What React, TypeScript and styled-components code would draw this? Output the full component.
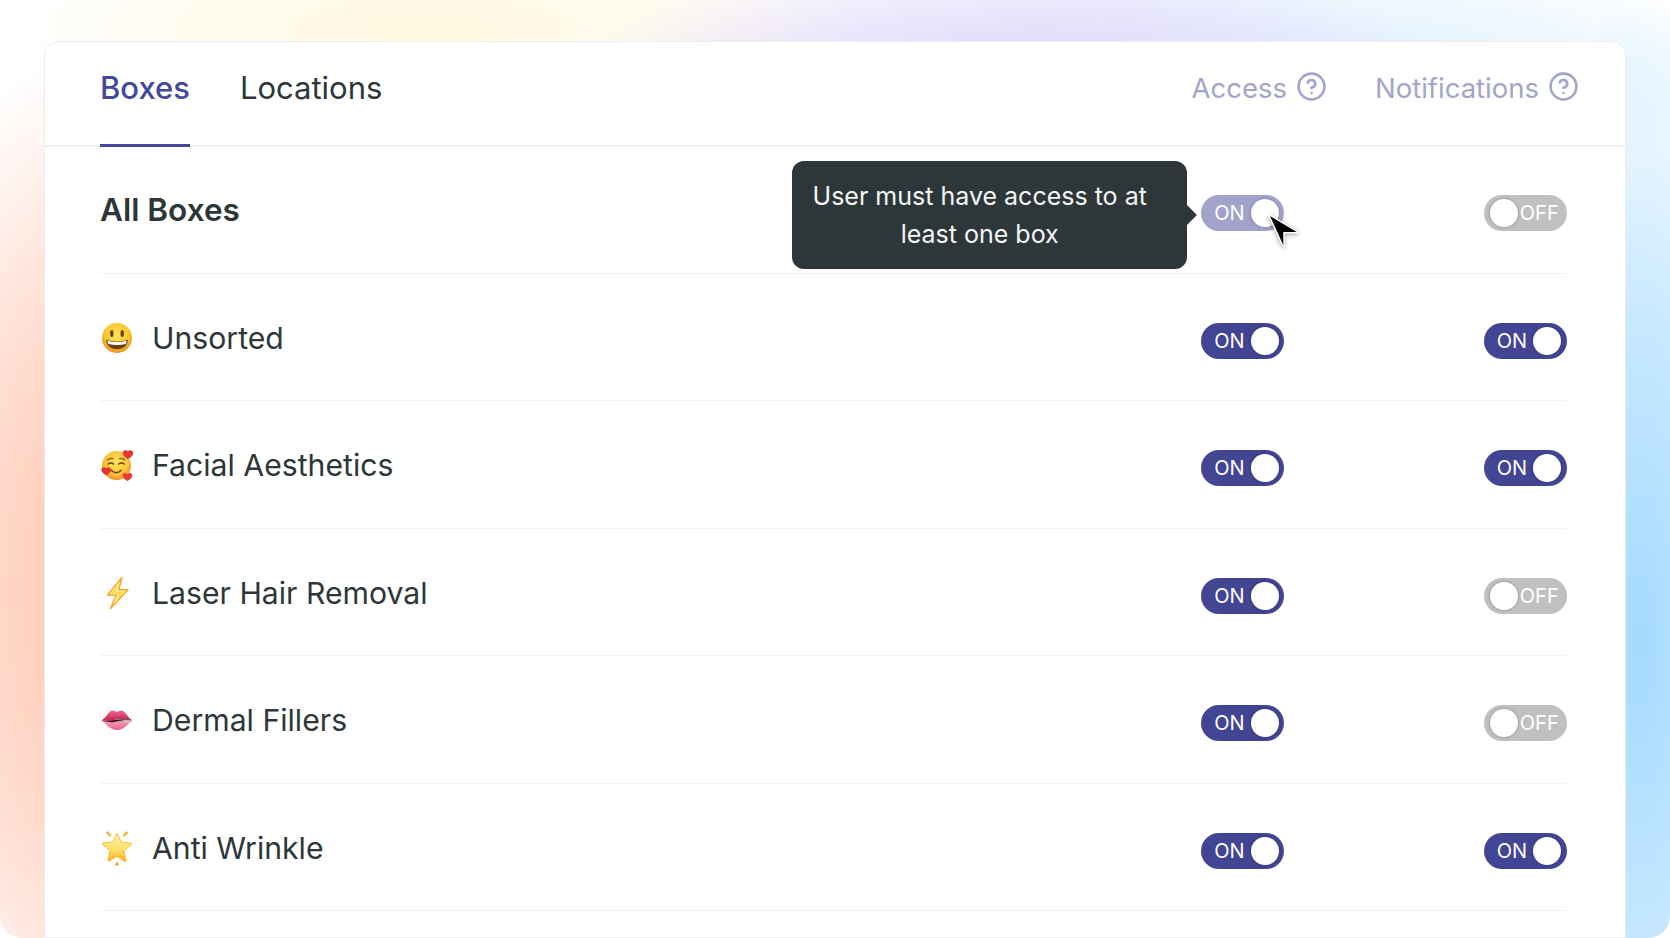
import React from 'react';
import styled, { createGlobalStyle } from 'styled-components';
import { CircleHelp } from 'lucide-react';

const GlobalStyle = createGlobalStyle`
    html, body {
        margin: 0;
        padding: 0;
        background: #fff;
        font-family: Inter, "Liberation Sans", sans-serif;
        -webkit-font-smoothing: antialiased;
    }
`;

const Frame = styled.div`
    display: flex;
    flex-direction: column;
    height: 938px;
    box-sizing: border-box;
    padding: 41px 44px 0 44px;
    overflow: hidden;
    border-radius: 22px;
    background:
        radial-gradient(ellipse 230px 540px at 90px 590px, #ffc4ae 0%, rgba(255, 196, 174, 0.6) 50%, rgba(255, 196, 174, 0) 100%),
        radial-gradient(ellipse 160px 640px at 1640px 640px, #a3d9ff 0%, rgba(163, 217, 255, 0.6) 50%, rgba(163, 217, 255, 0) 100%),
        radial-gradient(ellipse 430px 120px at 1010px 70px, #dfd6f9 0%, rgba(223, 214, 249, 0.55) 55%, rgba(223, 214, 249, 0) 100%),
        radial-gradient(ellipse 430px 120px at 1340px 70px, #dff1ff 0%, rgba(223, 241, 255, 0.55) 55%, rgba(223, 241, 255, 0) 100%),
        radial-gradient(ellipse 420px 110px at 430px 30px, #fff8e0 0%, rgba(255, 248, 224, 0.55) 55%, rgba(255, 248, 224, 0) 100%);
    background-color: #fff;
`;

const Card = styled.div`
    flex: 1;
    box-sizing: border-box;
    background: #fff;
    border: 1px solid rgba(60, 60, 90, 0.09);
    border-radius: 15px 15px 0 0;
    color: #2d3739;
`;

const Header = styled.header`
    display: flex;
    align-items: stretch;
    justify-content: space-between;
    height: 105px;
    box-sizing: border-box;
    padding: 0 46px 0 55px;
    border-bottom: 2px solid #f0f0f2;
`;

const Tabs = styled.nav`
    display: flex;
    gap: 50px;
`;

const Tab = styled.div<{ $active?: boolean }>`
    height: 105px;
    box-sizing: border-box;
    padding-top: 26.500px;
    font-size: 31px;
    line-height: 38px;
    font-weight: ${(p) => (p.$active ? 500 : 400)};
    color: ${(p) => (p.$active ? '#44489b' : '#2d3739')};
    border-bottom: 3px solid ${(p) => (p.$active ? '#44489b' : 'transparent')};
`;

const Columns = styled.div`
    display: flex;
    gap: 48px;
    padding-top: 29px;
`;

const ColumnTitle = styled.div`
    display: flex;
    align-items: flex-start;
    gap: 9px;
    font-size: 27.500px;
    line-height: 34px;
    color: #a2a4cd;
`;

const HelpIcon = styled(CircleHelp)`
    width: 31px;
    height: 31px;
    color: #a2a4cd;
`;

const List = styled.div`
    margin-top: -1px;
    padding: 0 58.300px 0 55px;
`;

const Row = styled.div`
    display: grid;
    grid-template-columns: 1fr 83px 83px;
    column-gap: 199.500px;
    align-items: center;
    height: 127.500px;
    box-sizing: border-box;
    padding-top: 2px;
    border-bottom: 1px solid #f2f2f3;
`;

const Name = styled.div<{ $bold?: boolean }>`
    display: flex;
    align-items: center;
    gap: 19px;
    font-size: ${(p) => (p.$bold ? 31.5 : 30.2)}px;
    line-height: 38px;
    font-weight: ${(p) => (p.$bold ? 600 : 400)};
    color: #2d3739;
`;

const EmojiBox = styled.svg`
    display: block;
    width: 32px;
    height: 32px;
    margin-left: 1px;
    flex: none;
    overflow: visible;
`;

const ToggleWrap = styled.div`
    position: relative;
    margin-top: 6px;
`;

const Toggle = styled.div<{ $on: boolean; $muted?: boolean }>`
    display: flex;
    flex-direction: ${(p) => (p.$on ? 'row' : 'row-reverse')};
    align-items: center;
    justify-content: space-between;
    width: 83px;
    height: 36px;
    box-sizing: border-box;
    padding: ${(p) => (p.$on ? '0 5.500px 0 13px' : '0 8px 0 6px')};
    border-radius: 18px;
    background: ${(p) => (p.$muted ? '#a2a3cb' : p.$on ? '#414594' : '#c2c0be')};
    color: #fff;
    font-size: 20px;
    font-weight: 400;
    line-height: 40px;
`;

const Knob = styled.span`
    width: 28px;
    height: 28px;
    border-radius: 50%;
    background: #fff;
    box-shadow: 0 0 3px rgba(0, 0, 0, 0.3);
`;

const Tooltip = styled.div`
    position: absolute;
    right: calc(100% + 14px);
    top: -34px;
    width: 395px;
    height: 108px;
    box-sizing: border-box;
    padding: 16px 32px 16px 12px;
    border-radius: 12px;
    background: #2d3739;
    color: #f4f5f5;
    font-size: 25px;
    line-height: 38px;
    text-align: center;

    &::after {
        content: '';
        position: absolute;
        top: 47px;
        right: -7px;
        width: 14px;
        height: 14px;
        background: #2d3739;
        transform: rotate(45deg);
    }
`;

const Cursor = styled.svg`
    position: absolute;
    left: 64px;
    top: 18px;
    width: 36px;
    height: 38px;
    filter: drop-shadow(0 1px 2px rgba(0, 0, 0, 0.4));
`;

type EmojiKind = 'smile' | 'hearts' | 'bolt' | 'lips' | 'star';

const Emoji = ({ kind }: { kind: EmojiKind }) => {
    if (kind === 'smile') {
        return (
            <EmojiBox viewBox="0 0 32 32">
                <defs>
                    <radialGradient id="smileFace" cx="50%" cy="40%" r="60%">
                        <stop offset="0%" stopColor="#ffe45c" />
                        <stop offset="65%" stopColor="#fbc92f" />
                        <stop offset="100%" stopColor="#ea8d1c" />
                    </radialGradient>
                </defs>
                <circle cx="16" cy="16" r="15" fill="url(#smileFace)" />
                <ellipse cx="10.800" cy="11.500" rx="1.700" ry="3.500" fill="#6b3f12" />
                <ellipse cx="21.200" cy="11.500" rx="1.700" ry="3.500" fill="#6b3f12" />
                <path d="M5 17.500c3.500 1.400 7 2 11 2s7.500-.6 11-2c-.3 6-4.800 9.800-11 9.800S5.300 23.500 5 17.500z" fill="#6b3f12" />
                <path d="M6.300 18.500c3 1 6.300 1.500 9.700 1.500s6.700-.5 9.700-1.500c-.2 1.500-.5 2.500-1 3.400-2.800.8-5.700 1.100-8.700 1.100s-5.900-.3-8.700-1.100c-.5-.9-.8-1.900-1-3.400z" fill="#fff" />
            </EmojiBox>
        );
    }
    if (kind === 'hearts') {
        return (
            <EmojiBox viewBox="0 0 32 32">
                <defs>
                    <radialGradient id="heartsFace" cx="50%" cy="40%" r="60%">
                        <stop offset="0%" stopColor="#ffe45c" />
                        <stop offset="65%" stopColor="#fbc53a" />
                        <stop offset="100%" stopColor="#ee8f2a" />
                    </radialGradient>
                </defs>
                <circle cx="15.500" cy="16.500" r="14.500" fill="url(#heartsFace)" />
                <path d="M6 11.500c2-2 4.500-2.500 7-1.800M18 9.700c2.500-.7 4.500-.2 6.300 1.600" stroke="#8a5414" strokeWidth="1.100" fill="none" />
                <path d="M7 15c1.800-1.300 3.800-1.300 5.500 0M17.700 15c1.700-1.300 3.700-1.300 5.500 0" stroke="#6b3f12" strokeWidth="1.500" fill="none" strokeLinecap="round" />
                <path d="M10.500 21.500c2.800 2.800 6.700 2.800 9.500 0" stroke="#6b3f12" strokeWidth="1.600" fill="none" strokeLinecap="round" />
                <path d="M27 10c-3-1.900-5.200-3.700-5.200-6.100 0-2.800 3.600-3.600 5.200-1.300 1.600-2.300 5.200-1.500 5.200 1.300 0 2.400-2.200 4.200-5.200 6.100z" fill="#e8342f" />
                <path d="M5.200 26.500C2.400 24.700.2 23 .2 20.800c0-2.600 3.500-3.400 5-1.200 1.500-2.200 5-1.400 5 1.200 0 2.200-2.200 3.900-5 5.700z" fill="#e8342f" />
                <path d="M26.500 32c-2.800-1.700-4.800-3.400-4.800-5.600 0-2.600 3.300-3.300 4.800-1.200 1.500-2.100 4.800-1.400 4.800 1.200 0 2.200-2 3.900-4.800 5.600z" fill="#ee3b36" />
            </EmojiBox>
        );
    }
    if (kind === 'bolt') {
        return (
            <EmojiBox viewBox="0 0 32 32">
                <path d="M21 .5 6.500 18h8.800L9.500 31.500 27 12.700h-9.300z" fill="#fff6b8" stroke="#f7a928" strokeWidth="1.500" strokeLinejoin="round" />
                <path d="M18.500 5.500 9.800 16.500h8.300l-3.900 8.500 9-10.600h-8.700z" fill="#ffd94a" />
            </EmojiBox>
        );
    }
    if (kind === 'lips') {
        return (
            <EmojiBox viewBox="0 0 32 32">
                <defs>
                    <linearGradient id="lipTop" x1="0" y1="0" x2="0" y2="1">
                        <stop offset="0%" stopColor="#f0668a" />
                        <stop offset="100%" stopColor="#b8234f" />
                    </linearGradient>
                    <linearGradient id="lipBottom" x1="0" y1="0" x2="0" y2="1">
                        <stop offset="0%" stopColor="#f7a0b8" />
                        <stop offset="100%" stopColor="#e8648b" />
                    </linearGradient>
                </defs>
                <path d="M.5 16.500c4 2 7.500 9.500 15.500 9.500s11.500-7.500 15.500-9.500z" fill="url(#lipBottom)" />
                <path d="M.5 16.500C5 14 8 6.500 11.500 6.500c1.800 0 3.300.8 4.500 1.700 1.200-.9 2.700-1.700 4.500-1.700 3.500 0 6.500 7.500 11 10-4.500.5-9.500.7-15.500.7s-11-.2-15.500-.7z" fill="url(#lipTop)" />
                <path d="M14 15.600c5-1.100 11-.9 17.500.9-5.500 1.300-12 1.300-17.500-.9z" fill="#e8e8ea" />
                <path d="M.5 16.500c4.500 1 8.500.9 12.500-.2 6-1.500 12.500-1.300 18.500.2-6-.4-12.500 0-18 1.400-4 .7-9 0-13-1.400z" fill="#2b1a20" />
            </EmojiBox>
        );
    }
    return (
        <EmojiBox viewBox="0 0 32 36" style={{ height: 36 }}>
            <defs>
                <linearGradient id="starFill" x1="0" y1="0" x2="0" y2="1">
                    <stop offset="0%" stopColor="#fff6b0" />
                    <stop offset="55%" stopColor="#ffe36a" />
                    <stop offset="100%" stopColor="#fbb02e" />
                </linearGradient>
            </defs>
            <path d="M16 3.500l4 8.500 9.600 1c.9.100 1.200 1.100.6 1.700l-7.200 6.300 2.100 9.300c.2.900-.8 1.500-1.500 1.100L16 26.500l-7.600 4.400c-.7.400-1.700-.2-1.500-1.100L9 20.500l-7.200-5.800c-.6-.6-.3-1.600.6-1.700l9.600-1z" fill="url(#starFill)" stroke="#fbbb3c" strokeWidth="1" />
            <path d="M6.500 1 10.500 5.500 8.800 6.800 4.800 3zM25.500 1 21.500 5.500l1.700 1.300 4-3.800z" fill="#f9b42f" />
            <path d="M16 31l2.400 4.500h-4.800z" fill="#f9a92a" />
        </EmojiBox>
    );
};

const rows: { emoji: EmojiKind; name: string; access: boolean; notify: boolean }[] = [
    { emoji: 'smile', name: 'Unsorted', access: true, notify: true },
    { emoji: 'hearts', name: 'Facial Aesthetics', access: true, notify: true },
    { emoji: 'bolt', name: 'Laser Hair Removal', access: true, notify: false },
    { emoji: 'lips', name: 'Dermal Fillers', access: true, notify: false },
    { emoji: 'star', name: 'Anti Wrinkle', access: true, notify: true },
];

const Switch = ({ on, muted }: { on: boolean; muted?: boolean }) => (
    <Toggle $on={on} $muted={muted}>
        <span>{on ? 'ON' : 'OFF'}</span>
        <Knob />
    </Toggle>
);

export default function App() {
    return (
        <Frame>
            <GlobalStyle />
            <Card>
                <Header>
                    <Tabs>
                        <Tab $active>Boxes</Tab>
                        <Tab>Locations</Tab>
                    </Tabs>
                    <Columns>
                        <ColumnTitle>
                            Access <HelpIcon />
                        </ColumnTitle>
                        <ColumnTitle>
                            Notifications <HelpIcon />
                        </ColumnTitle>
                    </Columns>
                </Header>
                <List>
                    <Row>
                        <Name $bold>All Boxes</Name>
                        <ToggleWrap>
                            <Switch on muted />
                            <Tooltip>User must have access to at least one box</Tooltip>
                            <Cursor viewBox="0 0 36 38">
                                <path d="M5 3 31.700 19H18.300V32.300z" fill="#000" stroke="#fff" strokeWidth="3" strokeLinejoin="round" paintOrder="stroke" />
                            </Cursor>
                        </ToggleWrap>
                        <ToggleWrap>
                            <Switch on={false} />
                        </ToggleWrap>
                    </Row>
                    {rows.map((r) => (
                        <Row key={r.name}>
                            <Name>
                                <Emoji kind={r.emoji} />
                                {r.name}
                            </Name>
                            <ToggleWrap>
                                <Switch on={r.access} />
                            </ToggleWrap>
                            <ToggleWrap>
                                <Switch on={r.notify} />
                            </ToggleWrap>
                        </Row>
                    ))}
                </List>
            </Card>
        </Frame>
    );
}
